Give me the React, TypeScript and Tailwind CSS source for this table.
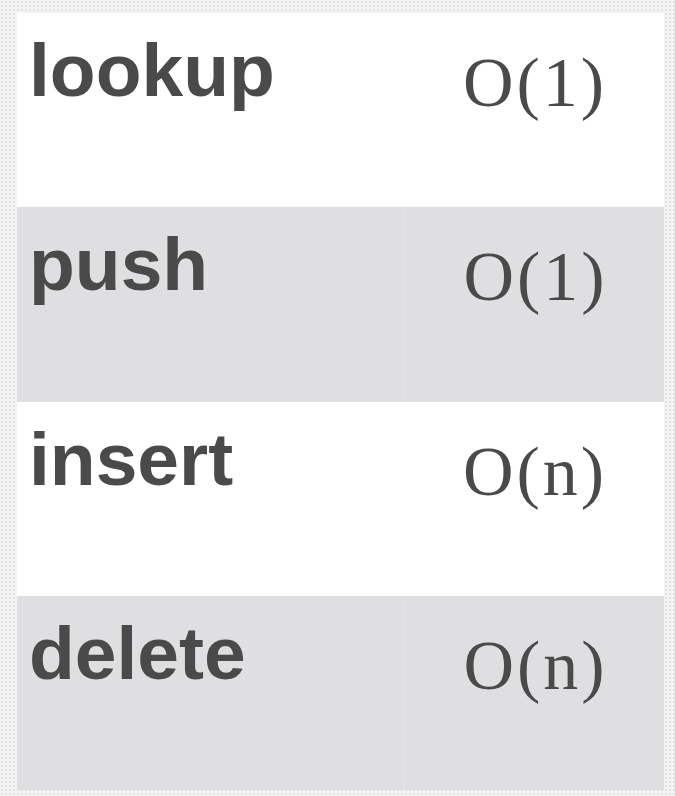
const rows = [
  { op: "lookup", cost: "O(1)", shaded: false },
  { op: "push", cost: "O(1)", shaded: true },
  { op: "insert", cost: "O(n)", shaded: false },
  { op: "delete", cost: "O(n)", shaded: true },
];

export default function App() {
  return (
    <div className="w-[675px] h-[796px] bg-[#f3f3f3] bg-[radial-gradient(#e2e2e2_1px,transparent_1px)] bg-[size:4px_4px] pt-[13px] pl-[17px] overflow-hidden">
      <div className="w-[647px] flex flex-col">
        {rows.map((r) => (
          <div
            key={r.op}
            className={
              r.shaded
                ? "h-[194.25px] flex bg-[#dfdfe1]"
                : "h-[194.25px] flex bg-white"
            }
          >
            <div className="w-[386px] pl-[12px] pt-[20px] text-[75px] leading-[75px] font-bold text-[#4a4a4a] font-['Liberation_Sans',Arial,sans-serif]">
              {r.op}
            </div>
            <div
              className={
                r.shaded
                  ? "flex-1 border-l border-[#e3e3e5] pt-[35px] pl-[3px] text-center text-[70px] leading-[70px] tracking-[3px] text-[#4a4a4a] font-['Liberation_Serif','Times_New_Roman',serif]"
                  : "flex-1 pt-[35px] pl-[3px] text-center text-[70px] leading-[70px] tracking-[3px] text-[#4a4a4a] font-['Liberation_Serif','Times_New_Roman',serif]"
              }
            >
              {r.cost}
            </div>
          </div>
        ))}
      </div>
    </div>
  );
}
